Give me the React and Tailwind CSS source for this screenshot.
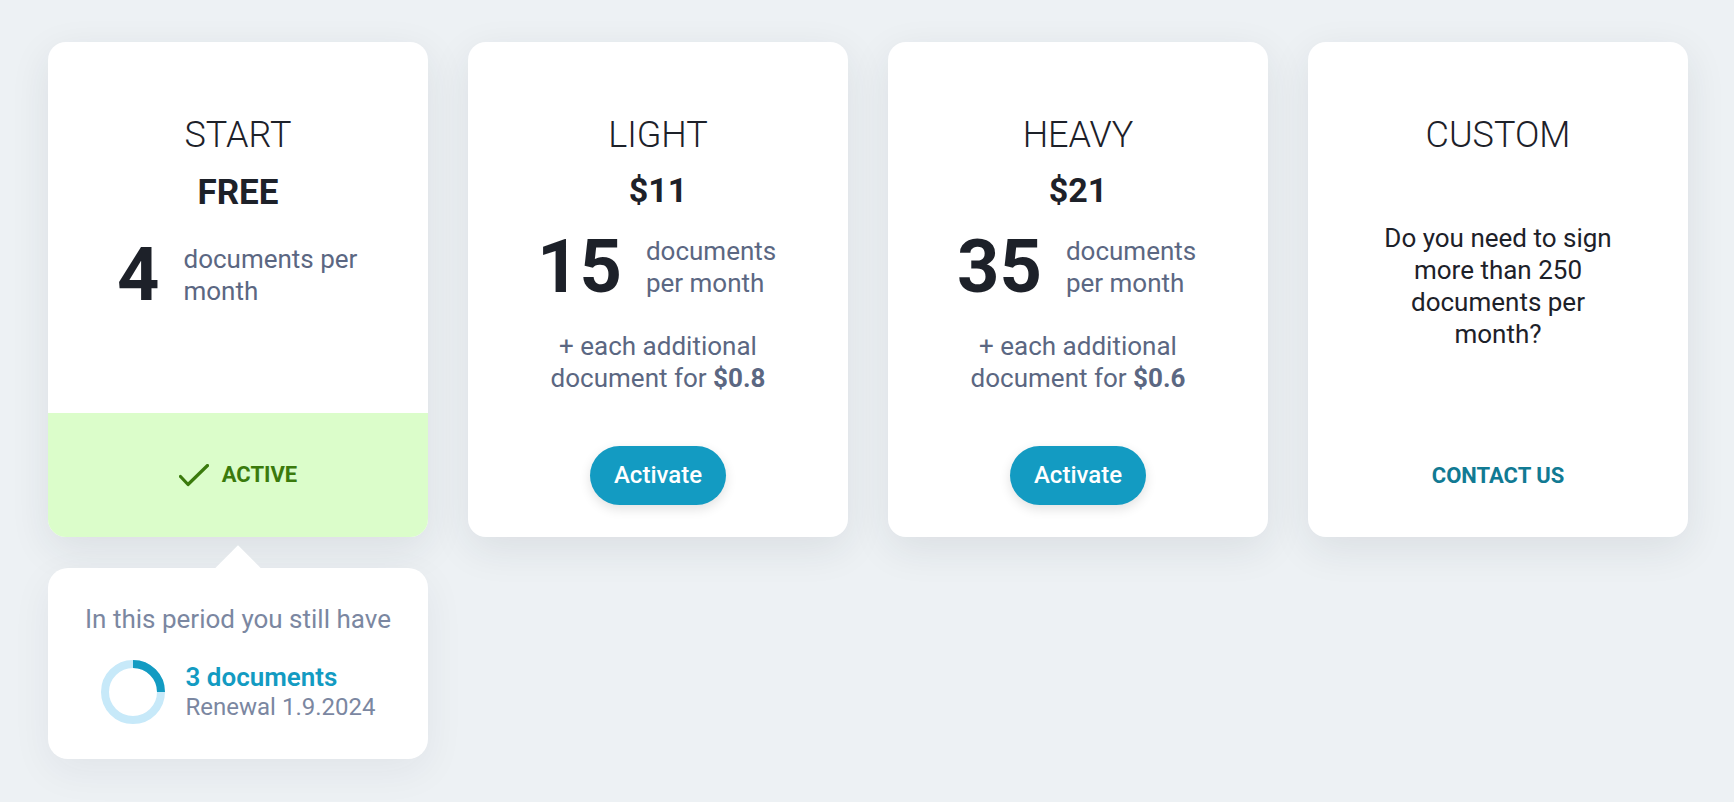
import React from 'react';

const plans = [
  { name: 'LIGHT', price: '$11', count: '15', extra: '$0.8' },
  { name: 'HEAVY', price: '$21', count: '35', extra: '$0.6' },
];

const cardClass =
  'w-[380px] h-[495px] bg-white rounded-[18px] overflow-hidden flex flex-col shadow-[0_12px_40px_rgba(30,40,60,0.09)]';

const CheckIcon = () => (
  <svg width="30" height="23" viewBox="0 0 30 23" fill="none">
    <path d="M1.5 12.5 L9 20.5 L28.5 1.5" stroke="#3a7a0c" strokeWidth="3.2" strokeLinecap="round" strokeLinejoin="round" />
  </svg>
);

const Ring = () => {
  const r = 28;
  const c = 2 * Math.PI * r;
  return (
    <svg width="64" height="64" viewBox="0 0 64 64" className="shrink-0">
      <circle cx="32" cy="32" r={r} fill="none" stroke="#c7e9f9" strokeWidth="8" />
      <circle
        cx="32"
        cy="32"
        r={r}
        fill="none"
        stroke="#139bc2"
        strokeWidth="8"
        strokeDasharray={`${c * 0.25} ${c}`}
        transform="rotate(-90 32 32)"
      />
    </svg>
  );
};

const Title = ({ children }) => (
  <h2 className="text-[36px] font-light leading-[42px] text-[#1d2129]">{children}</h2>
);

const Amount = ({ count }) => (
  <div className="w-[242px] mx-auto flex items-center gap-[24px] text-left">
    <span className="text-[74px] font-bold leading-none text-[#1d2129] shrink-0">{count}</span>
    <span className="text-[26px] leading-[32px] text-[#5b6782]">documents per month</span>
  </div>
);

export default function App() {
  return (
    <div
      className="min-h-screen bg-[#edf1f4] pt-[42px] pl-[48px]"
      style={{ fontFamily: 'Roboto, "Noto Sans", sans-serif' }}
    >
      <div className="flex items-start gap-[40px]">
        {/* Start plan + usage popover */}
        <div className="w-[380px] flex flex-col">
          <div className={cardClass}>
            <div className="flex-1 pt-[72px] text-center">
              <Title>START</Title>
              <div className="mt-[17px] text-[35px] font-bold leading-[40px] text-[#1d2129]">FREE</div>
              <div className="mt-[25px]">
                <Amount count="4" />
              </div>
            </div>
            <div className="h-[124px] bg-[#dbfdca] flex items-center justify-center gap-[13px]">
              <CheckIcon />
              <span className="text-[22px] font-bold text-[#3a7a0c] leading-none">ACTIVE</span>
            </div>
          </div>

          <div className="relative mt-[31px] bg-white rounded-[20px] pt-[35px] pb-[35px] shadow-[0_12px_40px_rgba(30,40,60,0.06)]">
            <div className="absolute left-1/2 -top-[16px] -ml-[16px] w-[32px] h-[32px] bg-white rotate-45" />
            <div className="relative text-center text-[26px] leading-[32px] text-[#7b87a1]">
              In this period you still have
            </div>
            <div className="relative mt-[25px] flex items-center justify-center gap-[21px]">
              <Ring />
              <div>
                <div className="text-[26px] font-semibold leading-[30px] text-[#139bc2]">3 documents</div>
                <div className="text-[24px] leading-[30px] text-[#7b87a1]">Renewal 1.9.2024</div>
              </div>
            </div>
          </div>
        </div>

        {plans.map((p) => (
          <div key={p.name} className={cardClass}>
            <div className="flex-1 pt-[72px] text-center">
              <Title>{p.name}</Title>
              <div className="mt-[14px] text-[34px] font-bold leading-[40px] text-[#1d2129]">{p.price}</div>
              <div className="mt-[20px]">
                <Amount count={p.count} />
              </div>
              <p className="mt-[26px] text-[26px] leading-[32px] text-[#5b6782]">
                + each additional
                <br />
                document for <span className="font-bold">{p.extra}</span>
              </p>
            </div>
            <div className="h-[124px] flex items-center justify-center">
              <button className="h-[59px] px-[24px] rounded-full bg-[#139bc2] text-white text-[24px] font-medium shadow-[0_4px_12px_rgba(0,0,0,0.12)]">
                Activate
              </button>
            </div>
          </div>
        ))}

        {/* Custom plan */}
        <div className={cardClass}>
          <div className="flex-1 pt-[72px] text-center">
            <Title>CUSTOM</Title>
            <p className="mt-[66px] mx-auto max-w-[240px] text-[26px] leading-[32px] text-[#1d2129]">
              Do you need to sign more than 250 documents per month?
            </p>
          </div>
          <div className="h-[124px] flex items-center justify-center">
            <span className="text-[22px] font-bold text-[#117a93]">CONTACT US</span>
          </div>
        </div>
      </div>
    </div>
  );
}
